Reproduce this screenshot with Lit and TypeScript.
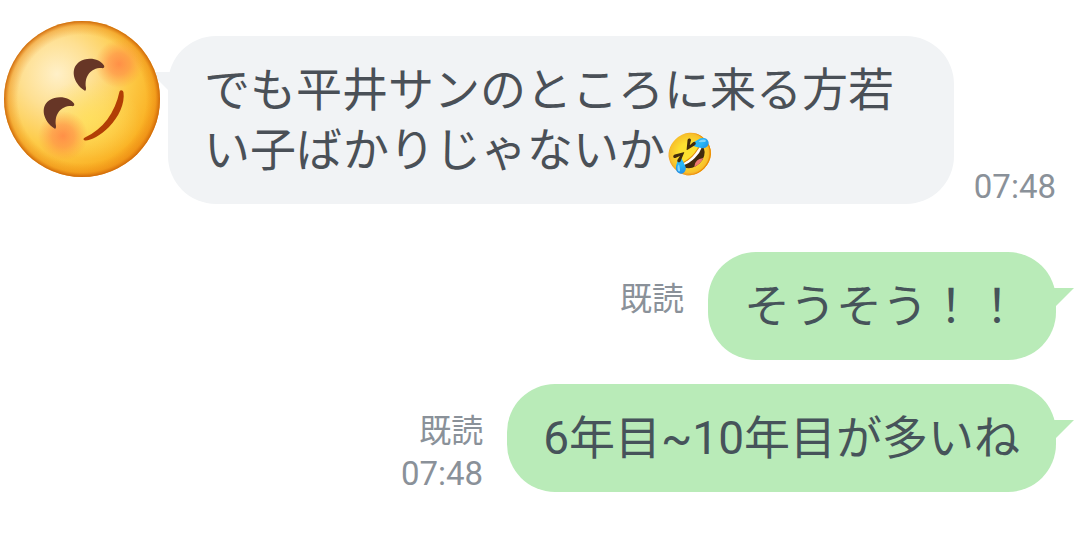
import { LitElement, html, css, nothing } from "lit";
import { customElement, property } from "lit/decorators.js";

@customElement("smile-avatar")
class SmileAvatar extends LitElement {
  static styles = css`
    :host { display: block; flex: none; width: 156px; height: 156px; }
    .face { display: block; width: 100%; height: 100%; }
  `;
  render() {
    return html`<svg class="face" viewBox="0 0 156 156" role="img" aria-label="Smiling face">
      <defs>
        <radialGradient id="skin" cx="0.34" cy="0.34" r="0.74">
          <stop offset="0" stop-color="#fff0c8"/>
          <stop offset="0.3" stop-color="#fee093"/>
          <stop offset="0.62" stop-color="#fdcb48"/>
          <stop offset="0.86" stop-color="#fab326"/>
          <stop offset="1" stop-color="#f39a18"/>
        </radialGradient>
        <radialGradient id="edge" cx="0.5" cy="0.5" r="0.5">
          <stop offset="0.82" stop-color="#e87a0c" stop-opacity="0"/>
          <stop offset="0.94" stop-color="#e87f0e" stop-opacity="0.4"/>
          <stop offset="1" stop-color="#cb6408" stop-opacity="0.95"/>
        </radialGradient>
        <radialGradient id="glow" cx="0.5" cy="0.5" r="0.5">
          <stop offset="0" stop-color="#ffe25c" stop-opacity="0.75"/>
          <stop offset="1" stop-color="#ffe25c" stop-opacity="0"/>
        </radialGradient>
        <radialGradient id="blush" cx="0.5" cy="0.5" r="0.5">
          <stop offset="0" stop-color="#ff8845" stop-opacity="0.9"/>
          <stop offset="0.45" stop-color="#ff8d45" stop-opacity="0.65"/>
          <stop offset="1" stop-color="#ff9a40" stop-opacity="0"/>
        </radialGradient>
      </defs>
      <circle cx="78" cy="78" r="78" fill="url(#skin)"/>
      <ellipse cx="86" cy="98" rx="50" ry="40" fill="url(#glow)"/>
      <circle cx="78" cy="78" r="78" fill="url(#edge)"/>
      <circle cx="115" cy="43" r="24" fill="url(#blush)"/>
      <circle cx="59" cy="115" r="25" fill="url(#blush)"/>
      <path fill="#673626" d="M80.500 69.500C69 62 66 48 75 41C84 35 96 38 100 44.500C101 46.500 99.500 47.500 97 47C87 47 80 55 82 67C82 69.500 81.500 70 80.500 69.500Z"/>
      <path fill="#673626" d="M50.500 107.500C39 100 36 86 45 79.500C54 73.500 66 76.500 70 82.500C71 84.500 69.500 85.500 67 85C57 85 50 93 52 105C52 107.500 51.500 108 50.500 107.500Z"/>
      <path fill="#b23e05" d="M115.500 70.500C116.500 68.500 119 69 119.500 71.500C121 82 115 96 105 106C96 115 86 120 81 119.500C79 119 79 117.500 81 116.500C99 108 111 92 115.500 70.500Z"/>
    </svg>`;
  }
}

@customElement("chat-message")
class ChatMessage extends LitElement {
  @property() side: "in" | "out" = "in";
  @property() text = "";
  @property() emoji = "";
  @property() time = "";
  @property({ type: Boolean }) read = false;

  static styles = css`
    :host { display: block; }
    .row { display: flex; }
    .in { padding-left: 4px; padding-right: 24px; gap: 8px; }
    .out { justify-content: flex-end; padding-right: 24px; gap: 24px; }
    .avatar { z-index: 1; margin-top: -15px; margin-bottom: -15px; }
    .bubble {
      position: relative;
      box-sizing: border-box;
      margin: 0;
      padding: 24px 36px;
      border-radius: 48px;
      font-size: 46px;
      line-height: 60px;
      overflow-wrap: anywhere;
    }
    .in .bubble { flex: 1; background: #f1f3f5; color: #4a5057; }
    .out .bubble { background: #b9ebb8; color: #46535a; }
    .emoji { font-size: 40px; line-height: 40px; vertical-align: -2px; }
    .tail { position: absolute; top: 36px; width: 20px; height: 18px; }
    .in .tail { right: 100%; margin-right: -2px; fill: #f1f3f5; transform: scaleX(-1); }
    .out .tail { left: 100%; margin-left: -2px; fill: #b9ebb8; }
    .meta {
      display: flex;
      flex-direction: column;
      flex: none;
      gap: 9px;
      color: #8a9199;
      font-size: 33px;
      line-height: 34px;
      text-align: right;
    }
    .in .meta { justify-content: flex-end; margin-left: 12px; }
    .out .meta { padding-top: 30px; }
    .read { font-size: 32px; }
  `;

  render() {
    const outgoing = this.side === "out";
    const bubble = html`<p class="bubble">${this.text}${this.emoji ? html`<span class="emoji">${this.emoji}</span>` : nothing}<svg class="tail" viewBox="0 0 20 18" aria-hidden="true"><path d="M0 0H20L2 18H0Z"/></svg></p>`;
    const meta = html`<div class="meta">
      ${this.read ? html`<span class="read">既読</span>` : nothing}
      ${this.time ? html`<time datetime=${this.time}>${this.time}</time>` : nothing}
    </div>`;
    return outgoing
      ? html`<div class="row out">${meta}${bubble}</div>`
      : html`<div class="row in"><smile-avatar class="avatar"></smile-avatar>${bubble}${meta}</div>`;
  }
}

@customElement("app-root")
class AppRoot extends LitElement {
  static styles = css`
    :host {
      display: block;
      min-height: 100vh;
      box-sizing: border-box;
      background: #fff;
      font-family: Roboto, "Noto Sans CJK JP", sans-serif;
    }
    .chat { display: flex; flex-direction: column; gap: 24px; margin: 0; padding: 36px 0 24px; list-style: none; }
    .received { margin-bottom: 24px; }
  `;
  render() {
    return html`<ol class="chat" lang="ja">
      <li class="received"><chat-message side="in" text="でも平井サンのところに来る方若い子ばかりじゃないか" emoji="🤣" time="07:48"></chat-message></li>
      <li><chat-message side="out" text="そうそう！！" read></chat-message></li>
      <li><chat-message side="out" text="6年目~10年目が多いね" time="07:48" read></chat-message></li>
    </ol>`;
  }
}
